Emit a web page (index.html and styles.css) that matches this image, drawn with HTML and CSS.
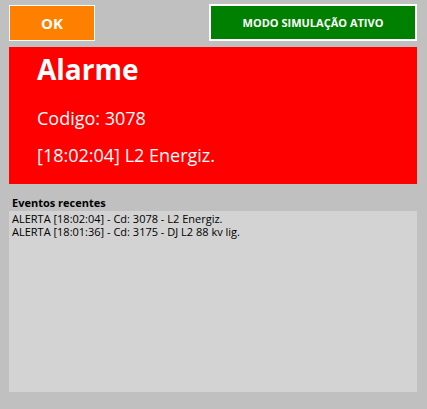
FILE: index.html
```html
<!DOCTYPE html>
<html lang="pt">
<head>
<meta charset="utf-8">
<link rel="stylesheet" href="styles.css">
</head>
<body>
<div class="app">
  <div class="toolbar">
    <button class="btn btn-ok">OK</button>
    <div class="btn btn-mode">MODO SIMULAÇÃO ATIVO</div>
  </div>
  <div class="alarm">
    <div class="alarm-title">Alarme</div>
    <div class="alarm-code">Codigo: 3078</div>
    <div class="alarm-msg">[18:02:04] L2 Energiz.</div>
  </div>
  <div class="events-title">Eventos recentes</div>
  <div class="events">
    <div class="event">ALERTA [18:02:04] - Cd: 3078 - L2 Energiz.</div>
    <div class="event">ALERTA [18:01:36] - Cd: 3175 - DJ L2 88 kv lig.</div>
  </div>
</div>
</body>
</html>
```

FILE: styles.css
```css
html, body {
  margin: 0;
  padding: 0;
  background: #c0c0c0;
  width: 427px;
  height: 409px;
  overflow: hidden;
  font-family: "Open Sans", "Noto Sans", sans-serif;
}

.app {
  display: flex;
  flex-direction: column;
  padding: 4px 10px 0 9px;
}

.toolbar {
  display: flex;
  justify-content: space-between;
  align-items: flex-start;
  height: 37px;
}

.btn {
  box-sizing: border-box;
  display: flex;
  align-items: center;
  justify-content: center;
  color: #fff;
  font-family: "Open Sans", "Noto Sans", sans-serif;
  font-weight: bold;
  padding: 0;
  margin: 0;
}

.btn-ok {
  margin-top: 1px;
  width: 86px;
  height: 36px;
  background: #ff8000;
  border: 1px solid #fff;
  font-size: 15px;
}

.btn-mode {
  width: 208px;
  height: 37px;
  background: #008000;
  border: 2px solid #fff;
  font-size: 11px;
}

.alarm {
  margin-top: 6px;
  height: 137px;
  box-sizing: border-box;
  background: #ff0000;
  color: #fff;
  padding: 5px 0 0 28px;
}

.alarm-title {
  font-size: 28px;
  font-weight: bold;
  line-height: 34px;
}

.alarm-code,
.alarm-msg {
  font-size: 18px;
  line-height: 24px;
}

.alarm-code {
  margin-top: 20px;
}

.alarm-msg {
  margin-top: 13px;
}

.events-title {
  margin-top: 12px;
  padding-left: 3px;
  font-size: 11px;
  font-weight: bold;
  line-height: 13px;
  color: #000;
}

.events {
  margin-top: 2px;
  height: 181px;
  box-sizing: border-box;
  background: #d3d3d3;
  padding: 1px 0 0 3px;
}

.event {
  font-size: 11px;
  line-height: 13px;
  color: #000;
}
```
